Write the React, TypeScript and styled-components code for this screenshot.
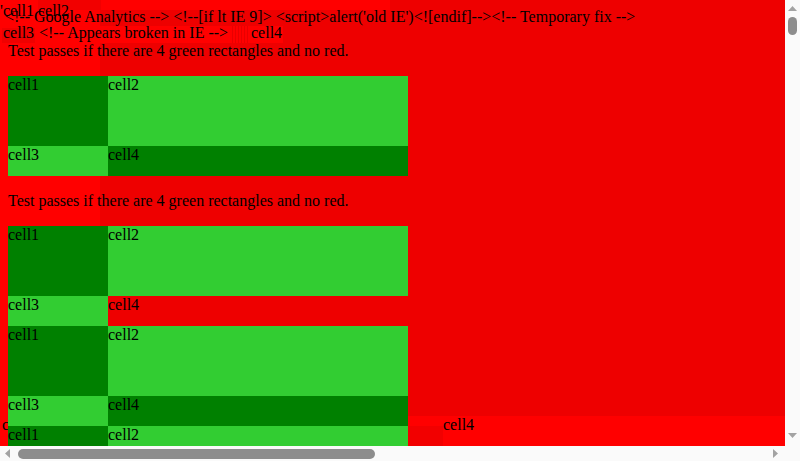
import React from "react";
import styled, { createGlobalStyle } from "styled-components";

const Global = createGlobalStyle`
  html, body { margin: 0; padding: 0; background: #ffffff; overflow: hidden; }
  body {
    font-family: "Liberation Serif", "Times New Roman", serif;
    font-size: 16px;
    line-height: 18px;
    color: #000;
  }
`;

/* ---------- window frame with scrollbars ---------- */
const Frame = styled.div`
  width: 800px;
  height: 461px;
  display: grid;
  grid-template-columns: 785px 15px;
  grid-template-rows: 446px 15px;
  background: #fafafa;
`;

const Viewport = styled.div`
  position: relative;
  overflow: hidden;
  background: #ff0000;
  padding: 8px;
  box-sizing: border-box;
`;

const VBar = styled.div`
  display: flex;
  flex-direction: column;
  align-items: center;
  background: #fafafa;
  padding: 6px 0 8px;
  box-sizing: border-box;
`;

const HBar = styled.div`
  display: flex;
  align-items: center;
  background: #fafafa;
  padding: 0 7px 0 5px;
  box-sizing: border-box;
`;

const Corner = styled.div`
  background: #fafafa;
`;

const VThumb = styled.div`
  width: 9px;
  height: 18px;
  margin-top: 6px;
  border-radius: 5px;
  background: #8d8d8d;
`;

const HThumb = styled.div`
  width: 357px;
  height: 10px;
  margin-left: 8px;
  border-radius: 5px;
  background: #8d8d8d;
`;

const Spacer = styled.div`
  flex: 1;
`;

const Arrow = styled.svg`
  display: block;
  flex: none;
`;

/* ---------- background layers ---------- */
const DarkPanel = styled.div`
  position: absolute;
  left: 100px;
  top: 0;
  right: 0;
  height: 416px;
  background: #ee0000;
  z-index: 0;
`;

/* ---------- top overlay (leftover table) ---------- */
const TopOverlay = styled.div`
  position: absolute;
  left: 0;
  top: 0;
  z-index: 1;
  display: flex;
  flex-direction: column;
  white-space: pre;
`;

const TopRow = styled.div`
  display: flex;
  width: 390px;
  padding-top: 2px;
  background: linear-gradient(#ff0000, #ff0000) 0 0 / 100% 10px no-repeat;
`;

const TopCell2 = styled.span`
  width: 63px;
  margin-top: -2px;
  padding-top: 2px;
  background: linear-gradient(#f20000, #f20000) 0 0 / 100% 10px no-repeat;
`;

const SecondRow = styled.div`
  display: flex;
  width: 281px;
  height: 17px;
  margin-top: 6px;
  padding-left: 2px;
  line-height: 13px;
  background: #ff0000;
`;

const Cell3Box = styled.span`
  width: 32px;
  padding-left: 1px;
  background: linear-gradient(#f00000, #f00000) 0 2px / 100% 15px no-repeat;
`;

const IEText = styled.span`
  width: 195px;
`;

const Stripes = styled.span`
  width: 20px;
  background: repeating-linear-gradient(
    90deg,
    #ff0000 0 2px,
    #e80000 2px 3px
  );
`;

const Cell4Text = styled.span`
  padding-left: 1px;
`;

/* ---------- bottom overlay band ---------- */
const BottomBand = styled.div`
  position: absolute;
  left: 0;
  right: 0;
  top: 416px;
  height: 30px;
  padding-left: 2px;
  display: flex;
  background: #ff0000;
  z-index: 1;
`;

const BottomLead = styled.span`
  width: 406px;
  flex: none;
`;

const BottomDark = styled.span`
  width: 35px;
  flex: none;
  background: linear-gradient(#f20000, #f20000) 0 10px / 100% 20px no-repeat;
`;

/* ---------- flow content ---------- */
const Comment = styled.div`
  position: relative;
  z-index: 2;
  margin-left: -3px;
  white-space: pre;
`;

const Note = styled.p`
  position: relative;
  z-index: 2;
  margin: 16px 0;
`;

const TestTable = styled.div`
  position: relative;
  z-index: 2;
  display: grid;
  grid-template-columns: 100px 300px;
  grid-template-rows: 70px 30px;
  width: 400px;
`;

type Tone = "dark" | "lime" | "red";

const toneColor: Record<Tone, string> = {
  dark: "#008000",
  lime: "#32cd32",
  red: "#ee0000",
};

const Cell = styled.div<{ $tone: Tone }>`
  background: ${(p) => toneColor[p.$tone]};
  line-height: 18px;
`;

const tables: Tone[][] = [
  ["dark", "lime", "lime", "dark"],
  ["dark", "lime", "lime", "red"],
  ["dark", "lime", "lime", "dark"],
  ["dark", "lime", "lime", "dark"],
];

function Table({ tones }: { tones: Tone[] }) {
  return (
    <TestTable>
      {tones.map((t, i) => (
        <Cell key={i} $tone={t}>
          cell{i + 1}
        </Cell>
      ))}
    </TestTable>
  );
}

const ARROW = "#a3a3a3";

export default function App() {
  return (
    <>
      <Global />
      <Frame>
        <Viewport>
          <DarkPanel />
          <TopOverlay>
            <TopRow>
              <span>'cell1 </span>
              <TopCell2>cell2</TopCell2>
            </TopRow>
            <SecondRow>
              <Cell3Box>cell3</Cell3Box>
              <IEText>{" <!-- Appears broken in IE -->"}</IEText>
              <Stripes />
              <Cell4Text>cell4</Cell4Text>
            </SecondRow>
          </TopOverlay>
          <BottomBand>
            <BottomLead>cell3</BottomLead>
            <BottomDark />
            <span>cell4</span>
          </BottomBand>
          <Comment>
            {"<!-- Google Analytics --> <!--[if lt IE 9]> <script>alert('old IE')<![endif]--><!-- Temporary fix -->"}
          </Comment>
          <Note>Test passes if there are 4 green rectangles and no red.</Note>
          <Table tones={tables[0]} />
          <Note>Test passes if there are 4 green rectangles and no red.</Note>
          <Table tones={tables[1]} />
          <Table tones={tables[2]} />
          <Table tones={tables[3]} />
        </Viewport>
        <VBar>
          <Arrow width="9" height="5" viewBox="0 0 9 5">
            <polygon points="4.5,0 9,5 0,5" fill={ARROW} />
          </Arrow>
          <VThumb />
          <Spacer />
          <Arrow width="9" height="5" viewBox="0 0 9 5">
            <polygon points="0,0 9,0 4.5,5" fill={ARROW} />
          </Arrow>
        </VBar>
        <HBar>
          <Arrow width="5" height="9" viewBox="0 0 5 9">
            <polygon points="5,0 5,9 0,4.5" fill={ARROW} />
          </Arrow>
          <HThumb />
          <Spacer />
          <Arrow width="5" height="9" viewBox="0 0 5 9">
            <polygon points="0,0 5,4.5 0,9" fill={ARROW} />
          </Arrow>
        </HBar>
        <Corner />
      </Frame>
    </>
  );
}
